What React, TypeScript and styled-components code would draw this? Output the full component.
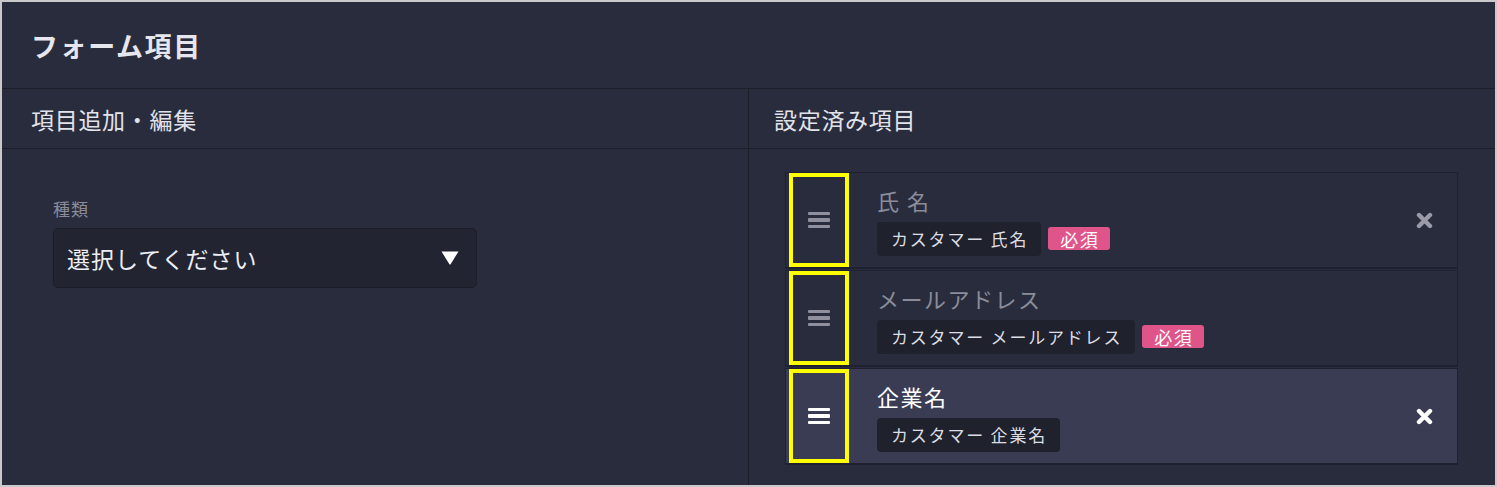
import React from 'react'
import styled, { createGlobalStyle } from 'styled-components'

const GlobalStyle = createGlobalStyle`
  html, body {
    margin: 0;
    padding: 0;
    background: #c9c9cc;
  }
  body {
    font-family: 'Noto Sans CJK JP', 'Noto Sans', sans-serif;
  }
`

const Frame = styled.div`
  box-sizing: border-box;
  width: 1497px;
  height: 487px;
  border: 2px solid #c9c9cc;
  background: #292c3d;
  color: #e4e5ec;
  overflow: hidden;
  display: flex;
  flex-direction: column;
`

const PanelHeader = styled.div`
  height: 86px;
  flex-shrink: 0;
  display: flex;
  align-items: center;
  padding-left: 29px;
  border-bottom: 1px solid #1c1e29;
  font-size: 27px;
  font-weight: 700;
  letter-spacing: 1.6px;
  color: #e6e7ee;
`

const Columns = styled.div`
  flex: 1;
  display: grid;
  grid-template-columns: 746px 1fr;
`

const Column = styled.div<{ $divider?: boolean }>`
  border-left: ${p => (p.$divider ? '1px solid #1c1e29' : 'none')};
  display: flex;
  flex-direction: column;
`

const ColumnTitle = styled.div<{ $indent: number }>`
  height: 59px;
  flex-shrink: 0;
  display: flex;
  align-items: center;
  padding-left: ${p => p.$indent}px;
  border-bottom: 1px solid #1c1e29;
  font-size: 23px;
  letter-spacing: 0.7px;
  color: #e2e3ea;
`

const LeftBody = styled.div`
  padding: 48px 0 0 51px;
`

const FieldLabel = styled.div`
  font-size: 17px;
  letter-spacing: 1px;
  color: #8b8c9b;
  line-height: 24px;
  margin-bottom: 7px;
`

const SelectBox = styled.div`
  box-sizing: border-box;
  width: 424px;
  height: 60px;
  display: flex;
  align-items: center;
  justify-content: space-between;
  padding: 0 17px 0 13px;
  background: #222431;
  border: 1px solid #1b1d27;
  border-radius: 5px;
  font-size: 23px;
  letter-spacing: 1px;
  color: #eceef4;
`

const RightBody = styled.div`
  padding: 23px 37px 0 36px;
  display: flex;
  flex-direction: column;
  gap: 1px;
`

const Item = styled.div<{ $active?: boolean }>`
  box-sizing: border-box;
  height: 97px;
  display: flex;
  align-items: center;
  background: ${p => (p.$active ? '#3a3c54' : '#292c3d')};
  border: 1px solid #1f2130;
  border-bottom-width: 2px;
  padding: 0 24px 0 3px;
`

const Handle = styled.div<{ $active?: boolean }>`
  box-sizing: border-box;
  width: 60px;
  height: 94px;
  border: 4px solid #ffff00;
  display: flex;
  flex-direction: column;
  align-items: center;
  justify-content: center;
  gap: 3px;
  flex-shrink: 0;

  span {
    display: block;
    width: 22px;
    height: 3.5px;
    border-radius: 1px;
    background: ${p => (p.$active ? '#ffffff' : '#8f8f9d')};
  }
`

const ItemBody = styled.div`
  flex: 1;
  padding-left: 28px;
  display: flex;
  flex-direction: column;
  gap: 7px;
`

const ItemTitle = styled.div<{ $active?: boolean }>`
  font-size: 22px;
  line-height: 30px;
  letter-spacing: 1.5px;
  color: ${p => (p.$active ? '#ffffff' : '#8b8c9a')};
`

const TagRow = styled.div`
  display: flex;
  align-items: center;
  gap: 7px;
`

const Tag = styled.span`
  display: inline-flex;
  align-items: center;
  height: 34px;
  padding: 0 13px 0 14px;
  background: #1f212c;
  border-radius: 4px;
  font-size: 17px;
  letter-spacing: 1.8px;
  color: #dcdde5;
`

const Badge = styled.span`
  display: inline-flex;
  align-items: center;
  height: 23px;
  padding: 0 11px 0 12px;
  background: #df5489;
  border-radius: 3px;
  font-size: 18px;
  letter-spacing: 1.5px;
  color: #ffffff;
`

const RemoveButton = styled.button<{ $active?: boolean }>`
  border: 0;
  background: none;
  padding: 0;
  width: 17px;
  height: 17px;
  color: ${p => (p.$active ? '#ffffff' : '#9a9aa8')};
  display: flex;
  cursor: pointer;
`

const CloseIcon = () => (
  <svg width="17" height="17" viewBox="0 0 17 17">
    <path d="M3 3 L14 14 M14 3 L3 14" stroke="currentColor" strokeWidth="4.4" strokeLinecap="round" />
  </svg>
)

const Caret = () => (
  <svg width="18" height="14" viewBox="0 0 18 14">
    <path d="M0.5 0.5 H17.5 L9.6 13.2 Q9 14 8.4 13.2 Z" fill="#ffffff" />
  </svg>
)

type Field = {
  title: string
  tag: string
  required: boolean
  removable: boolean
  active?: boolean
}

const fields: Field[] = [
  { title: '氏 名', tag: 'カスタマー 氏名', required: true, removable: true },
  { title: 'メールアドレス', tag: 'カスタマー メールアドレス', required: true, removable: false },
  { title: '企業名', tag: 'カスタマー 企業名', required: false, removable: true, active: true }
]

export default function App() {
  return (
    <>
      <GlobalStyle />
      <Frame>
        <PanelHeader>フォーム項目</PanelHeader>
        <Columns>
          <Column>
            <ColumnTitle $indent={29}>項目追加・編集</ColumnTitle>
            <LeftBody>
              <FieldLabel>種類</FieldLabel>
              <SelectBox>
                <span>選択してください</span>
                <Caret />
              </SelectBox>
            </LeftBody>
          </Column>
          <Column $divider>
            <ColumnTitle $indent={25}>設定済み項目</ColumnTitle>
            <RightBody>
              {fields.map(f => (
                <Item key={f.title} $active={f.active}>
                  <Handle $active={f.active}>
                    <span />
                    <span />
                    <span />
                  </Handle>
                  <ItemBody>
                    <ItemTitle $active={f.active}>{f.title}</ItemTitle>
                    <TagRow>
                      <Tag>{f.tag}</Tag>
                      {f.required && <Badge>必須</Badge>}
                    </TagRow>
                  </ItemBody>
                  {f.removable && (
                    <RemoveButton $active={f.active}>
                      <CloseIcon />
                    </RemoveButton>
                  )}
                </Item>
              ))}
            </RightBody>
          </Column>
        </Columns>
      </Frame>
    </>
  )
}
